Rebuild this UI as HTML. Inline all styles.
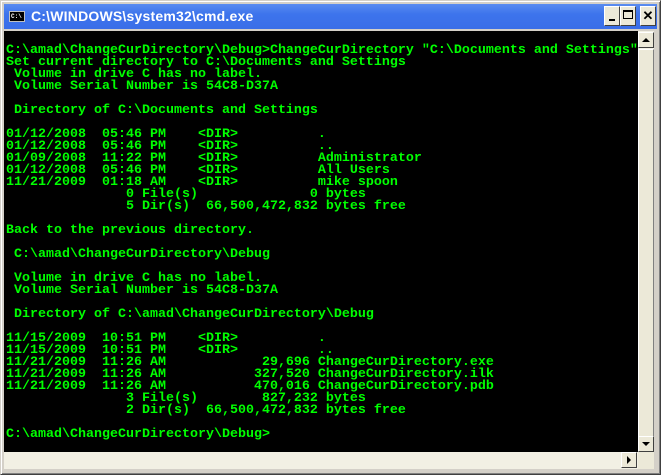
<!DOCTYPE html>
<html><head><meta charset="utf-8"><style>
*{margin:0;padding:0;box-sizing:border-box}
body{width:661px;height:475px;overflow:hidden;background:#d4d0c8;position:relative;font-family:"Liberation Sans",sans-serif}
.outer{position:absolute;left:0;top:0;width:661px;height:475px;border:1px solid;border-color:#d4d0c8 #404040 #404040 #d4d0c8;box-shadow:inset 1px 1px #fff,inset -1px -1px #808080}
.title{position:absolute;left:4px;top:4px;width:653px;height:25px;background:#3a6ee8;background:linear-gradient(#5a8cf0,#3d74ec 40%,#3a6ee8)}
.title .t{position:absolute;left:27px;top:4px;color:#fff;font-weight:bold;font-size:14px;letter-spacing:0.2px}
.icon{position:absolute;left:5px;top:7px;width:16px;height:11px;background:#000;border:1px solid #c0c0c0;color:#fff;font:bold 6px "Liberation Mono",monospace;line-height:9px;padding-left:1px}
.btn{position:absolute;top:2px;width:16px;height:20px;background:#ece9d8;border:1px solid;border-color:#fff #404040 #404040 #fff}
.con{position:absolute;left:4px;top:31px;width:634px;height:421px;background:#000;overflow:hidden}
pre{position:absolute;left:2px;top:14px;font:bold 13.33px/12px "Liberation Mono",monospace;color:#00ff00;white-space:pre}
.vs{position:absolute;left:638px;top:31px;width:16px;height:421px;background:#f2f0e4}
.hs{position:absolute;left:4px;top:452px;width:634px;height:17px;background:#f2f0e4}
.sb{position:absolute;width:16px;height:16px;background:#ece9d8;border:1px solid;border-color:#fff #404040 #404040 #fff}
.grip{position:absolute;left:638px;top:452px;width:16px;height:17px;background:#ece9d8}
</style></head><body>
<div class="outer"></div>
<div class="title"><div class="icon">C:\</div><div class="t">C:\WINDOWS\system32\cmd.exe</div>
<div class="btn" style="left:600px"><div style="position:absolute;left:4px;top:12px;width:6px;height:2px;background:#000"></div></div>
<div class="btn" style="left:616px"><div style="position:absolute;left:2px;top:3px;width:10px;height:9px;border:1px solid #000;border-top-width:2px"></div></div>
<div class="btn" style="left:636px;font:bold 13px 'Liberation Sans';text-align:center;line-height:17px">✕</div>
</div>
<div class="con"><pre>C:\amad\ChangeCurDirectory\Debug&gt;ChangeCurDirectory "C:\Documents and Settings"
Set current directory to C:\Documents and Settings
 Volume in drive C has no label.
 Volume Serial Number is 54C8-D37A

 Directory of C:\Documents and Settings

01/12/2008  05:46 PM    &lt;DIR&gt;          .
01/12/2008  05:46 PM    &lt;DIR&gt;          ..
01/09/2008  11:22 PM    &lt;DIR&gt;          Administrator
01/12/2008  05:46 PM    &lt;DIR&gt;          All Users
11/21/2009  01:18 AM    &lt;DIR&gt;          mike spoon
               0 File(s)              0 bytes
               5 Dir(s)  66,500,472,832 bytes free

Back to the previous directory.

 C:\amad\ChangeCurDirectory\Debug

 Volume in drive C has no label.
 Volume Serial Number is 54C8-D37A

 Directory of C:\amad\ChangeCurDirectory\Debug

11/15/2009  10:51 PM    &lt;DIR&gt;          .
11/15/2009  10:51 PM    &lt;DIR&gt;          ..
11/21/2009  11:26 AM            29,696 ChangeCurDirectory.exe
11/21/2009  11:26 AM           327,520 ChangeCurDirectory.ilk
11/21/2009  11:26 AM           470,016 ChangeCurDirectory.pdb
               3 File(s)        827,232 bytes
               2 Dir(s)  66,500,472,832 bytes free

C:\amad\ChangeCurDirectory\Debug&gt;</pre></div>
<div class="vs">
<div class="sb" style="left:0;top:1px"><div style="position:absolute;left:3px;top:5px;border:4px solid transparent;border-bottom:4px solid #000;border-top:0"></div></div>
<div class="sb" style="left:0;top:18px;height:400px;border-color:#fff #808080 #808080 #fff"></div>
<div class="sb" style="left:0;top:405px"><div style="position:absolute;left:3px;top:5px;border:4px solid transparent;border-top:4px solid #000;border-bottom:0"></div></div>
</div>
<div class="hs">
<div class="sb" style="left:617px;top:0"><div style="position:absolute;left:5px;top:3px;border:4px solid transparent;border-left:4px solid #000;border-right:0"></div></div>
</div>
<div class="grip"></div>
</body></html>
